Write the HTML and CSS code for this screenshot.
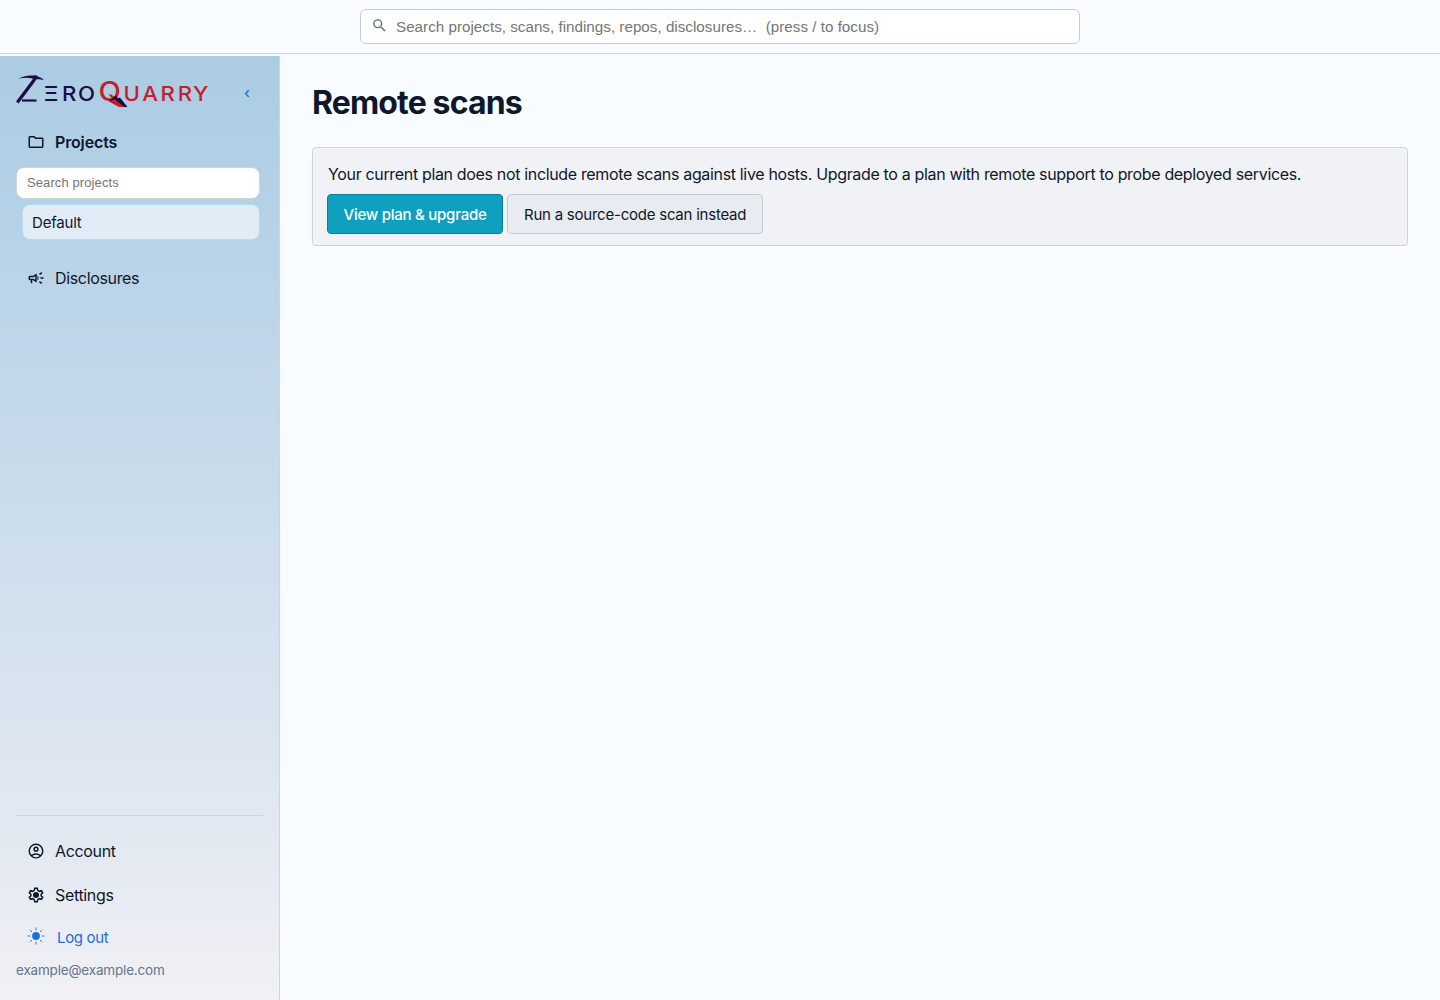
FILE: index.html
```html
<!DOCTYPE html>
<html lang="en">
<head>
    <meta charset="UTF-8">
    <meta name="viewport" content="width=device-width, initial-scale=1.0">
    <title>Remote scans - ZeroQuarry</title>
    <link rel="stylesheet" href="styles.css">
</head>
<body>
    <header class="topbar">
        <form class="search">
            <svg class="search-icon" viewBox="0 0 24 24"><path d="M15.5 14h-.79l-.28-.27A6.47 6.47 0 0 0 16 9.5 6.5 6.5 0 1 0 9.5 16c1.61 0 3.09-.59 4.23-1.57l.27.28v.79l5 4.99L20.49 19zm-6 0a4.5 4.5 0 1 1 0-9 4.5 4.5 0 0 1 0 9z"/></svg>
            <input type="text" placeholder="Search projects, scans, findings, repos, disclosures…  (press / to focus)">
        </form>
    </header>

    <div class="layout">
        <aside class="sidebar">
            <div class="brand">
                <svg class="logo" viewBox="0 0 194 34">
                    <!-- pickaxe -->
                    <path d="M1.3 27.500 L18.500 4.500" stroke="#1d0b46" stroke-width="3.200"/>
                    <path d="M6 25.500H20.500" stroke="#1d0b46" stroke-width="2.200"/>
                    <path d="M2.500 3.600C8 .8 13 0 17.500 .6L20 .2 22 1.600C24.500 2.400 26.500 3.800 28 5.300C25 4.200 22.500 4 21 4.300L19 5.600 16.500 3.400C12 2.400 7 2.600 2.500 3.600z" fill="#1d0b46"/>
                    <g class="logo-zero" transform="scale(1.08 1)">
                        <text x="25.700 42.500 57.500" y="26">ΞRO</text>
                    </g>
                    <g class="logo-quarry" transform="scale(1.08 1)">
                        <text class="logo-q" x="76.500" y="26.500">Q</text>
                        <text x="99.500 117 133.700 149.800 164" y="26">UARRY</text>
                    </g>
                    <path d="M93 26.300L99.500 20.600 102 23.300 104 22.500 111.500 32H104.500z" fill="#1d0b46"/>
                    <path d="M93 26.500L98.500 24.200 108.500 32H103z" fill="#c41f2b"/>
                </svg>
                <button type="button" class="collapse-btn">‹</button>
            </div>

            <nav class="nav">
                <a class="nav-link active" href="#">
                    <svg viewBox="0 0 24 24"><path d="M9.17 6l2 2H20v10H4V6h5.17M10 4H4c-1.1 0-2 .9-2 2v12c0 1.1.9 2 2 2h16c1.1 0 2-.9 2-2V8c0-1.1-.9-2-2-2h-8z"/></svg>
                    <span>Projects</span>
                </a>
                <input class="project-search" type="text" placeholder="Search projects">
                <a class="project" href="#">Default</a>
                <a class="nav-link disclosures" href="#">
                    <svg viewBox="0 0 24 24"><path d="M18 11v2h4v-2zM16 17.61c.96.71 2.21 1.65 3.2 2.39.4-.53.8-1.07 1.2-1.6-.99-.74-2.24-1.68-3.2-2.4zM20.4 5.6c-.4-.53-.8-1.07-1.2-1.6-.99.74-2.24 1.68-3.2 2.4.4.53.8 1.07 1.2 1.6.96-.72 2.21-1.65 3.2-2.4zM4 9c-1.1 0-2 .9-2 2v2c0 1.1.9 2 2 2h1v4h2v-4h1l5 3V6L8 9zm5.03 1.71L11 9.53v4.94l-1.97-1.18-.48-.29H4v-2h4.55zM15.5 12c0-1.33-.58-2.53-1.5-3.35v6.69c.92-.81 1.5-2.01 1.5-3.34z"/></svg>
                    <span>Disclosures</span>
                </a>
            </nav>

            <div class="sidebar-footer">
                <a class="nav-link" href="#">
                    <svg viewBox="0 0 24 24"><path fill-rule="evenodd" d="M12 2a10 10 0 1 0 0 20 10 10 0 0 0 0-20zM7.35 18.5C8.66 17.56 10.26 17 12 17s3.34.56 4.65 1.5a7.93 7.93 0 0 1-9.3 0zm10.79-1.38A9.95 9.95 0 0 0 12 15c-2.32 0-4.45.8-6.14 2.12A8 8 0 1 1 20 12c0 1.95-.7 3.73-1.86 5.12zM12 6a3.5 3.5 0 1 0 0 7 3.5 3.5 0 0 0 0-7zm0 5a1.5 1.5 0 1 1 0-3 1.5 1.5 0 0 1 0 3z"/></svg>
                    <span>Account</span>
                </a>
                <a class="nav-link" href="#">
                    <svg viewBox="0 0 24 24"><path d="M10.300 3h3.400l.6 2.800 2.200 1.300 2.800-.9 1.600 2.900-2.100 1.900v2l2.100 1.900-1.600 2.900-2.800-.9-2.200 1.300-.6 2.800h-3.400l-.6-2.800-2.200-1.300-2.800.9-1.600-2.900L5.200 13v-2L3.100 9.100l1.600-2.900 2.800.9 2.200-1.300z" fill="none" stroke="currentColor" stroke-width="2"/><circle cx="12" cy="12" r="4"/></svg>
                    <span>Settings</span>
                </a>
                <a class="nav-link logout" href="#">
                    <svg viewBox="0 0 18 18"><circle cx="9" cy="9" r="3.900"/><path d="M9 .4v3M9 14.600v3M.4 9h3M14.600 9h3M2.900 2.900l2.100 2.100M13 13l2.100 2.100M2.900 15.100L5 13M13 5l2.100-2.100" fill="none" stroke="currentColor" stroke-width=".9"/></svg>
                    <span>Log out</span>
                </a>
                <div class="email">example@example.com</div>
            </div>
        </aside>

        <main class="content">
            <h1>Remote scans</h1>
            <div class="notice">
                <p>Your current plan does not include remote scans against live hosts. Upgrade to a plan with remote support to probe deployed services.</p>
                <div class="actions">
                    <a class="btn btn-primary" href="#">View plan &amp; upgrade</a>
                    <a class="btn" href="#">Run a source-code scan instead</a>
                </div>
            </div>
        </main>
    </div>
</body>
</html>
```
FILE: styles.css
```css
* {
    box-sizing: border-box;
}

body {
    margin: 0;
    height: 100vh;
    display: flex;
    flex-direction: column;
    font-family: Inter, sans-serif;
    font-size: 16px;
    letter-spacing: -.34px;
    color: #0f172a;
    background-color: #f8fbff;
    overflow: hidden;
}

a {
    color: inherit;
    text-decoration: none;
}

.topbar {
    height: 54px;
    flex: none;
    margin-bottom: 2px;
    display: flex;
    justify-content: center;
    align-items: flex-start;
    padding-top: 9px;
    border-bottom: 1px solid #cbd5dc;
}

.search {
    width: 720px;
    height: 35px;
    margin: 0;
    display: flex;
    align-items: center;
    padding: 0 10px;
    background-color: white;
    border: 1px solid #c3cbd3;
    border-radius: 6px;
}

.search-icon {
    width: 17px;
    height: 17px;
    margin-top: -3px;
    margin-right: 8px;
    fill: #5b6b80;
}

.search input {
    flex: 1;
    padding: 0;
    border: none;
    outline: none;
    font: 15.200px "Liberation Sans", Arial, sans-serif;
    letter-spacing: .015px;
    white-space: pre;
}

input::placeholder {
    color: #757575;
}

.layout {
    flex: 1;
    display: flex;
    min-height: 0;
}

.sidebar {
    width: 280px;
    flex: none;
    display: flex;
    flex-direction: column;
    padding: 16px 16px 20px;
    background: linear-gradient(#abcce3, #bbd4e8 25%, #e5eaf2 86%, #f1f1f5);
    border-right: 1px solid #cbd5dc;
}

.brand {
    height: 40px;
    display: flex;
    align-items: center;
    justify-content: space-between;
}

.logo {
    width: 194px;
    height: 34px;
}

.logo text {
    font-family: Inter, sans-serif;
    font-size: 20.500px;
    font-weight: 500;
    letter-spacing: 0;
}

.logo-zero text {
    fill: #1d0b46;
}

.logo-quarry text {
    fill: #c41f2b;
}

.logo .logo-q {
    font-size: 27px;
}

.collapse-btn {
    width: 32px;
    padding: 0;
    border: none;
    background: none;
    color: #1a6fdb;
    font: 500 15px Inter, sans-serif;
}

.nav {
    display: flex;
    flex-direction: column;
}

.nav-link {
    height: 44px;
    display: flex;
    align-items: center;
    gap: 10.500px;
    padding-left: 10.500px;
}

.nav-link svg {
    width: 18px;
    height: 18px;
    fill: currentColor;
}

.nav-link.active {
    height: 36px;
    margin-top: 12px;
    font-weight: 600;
    letter-spacing: -.15px;
}

.project-search {
    height: 32px;
    margin: 7px 3px 0 0;
    padding: 0 10px 2px;
    border: 1px solid #cbd5dc;
    border-radius: 8px;
    font: 13px "Liberation Sans", Arial, sans-serif;
    letter-spacing: .1px;
}

.project {
    height: 36px;
    display: flex;
    align-items: center;
    margin: 5px 3px 0 6px;
    padding-left: 9px;
    background-color: #e2ecf6;
    border: 1px solid #b3dfeb;
    border-radius: 8px;
    font-size: 15px;
    letter-spacing: -.2px;
}

.disclosures {
    margin-top: 16px;
}

.sidebar-footer {
    margin-top: auto;
    padding-top: 13px;
    border-top: 1px solid #cbd5dc;
}

.nav-link.logout {
    height: 40px;
    gap: 12.500px;
    color: #1a6fdb;
    font-size: 15px;
}

.logout svg {
    margin-top: -3px;
}

.email {
    padding-top: 3px;
    color: #64748b;
    font-size: 13.500px;
    line-height: 20px;
    letter-spacing: -.18px;
}

.content {
    flex: 1;
    padding: 27px 32px;
}

h1 {
    margin: 0 0 24px;
    font-size: 32px;
    line-height: 40px;
    letter-spacing: -.85px;
}

.notice {
    height: 99px;
    padding: 14px;
    background-color: #f1f2f6;
    border: 1px solid #cbd5dc;
    border-radius: 4px;
}

.notice p {
    margin: 0 0 8px 1px;
    line-height: 24px;
    white-space: nowrap;
}

.actions {
    display: flex;
    gap: 4px;
}

.btn {
    height: 40px;
    display: flex;
    align-items: center;
    padding: 0 16px;
    background-color: #e8ebf0;
    border: 1px solid #c3ccd6;
    border-radius: 4px;
    font-size: 15px;
    letter-spacing: -.23px;
}

.btn-primary {
    padding: 0 15.500px;
    background-color: #0f9fbf;
    border-color: #0b7f99;
    color: white;
    font-weight: 500;
    letter-spacing: -.25px;
}
```
